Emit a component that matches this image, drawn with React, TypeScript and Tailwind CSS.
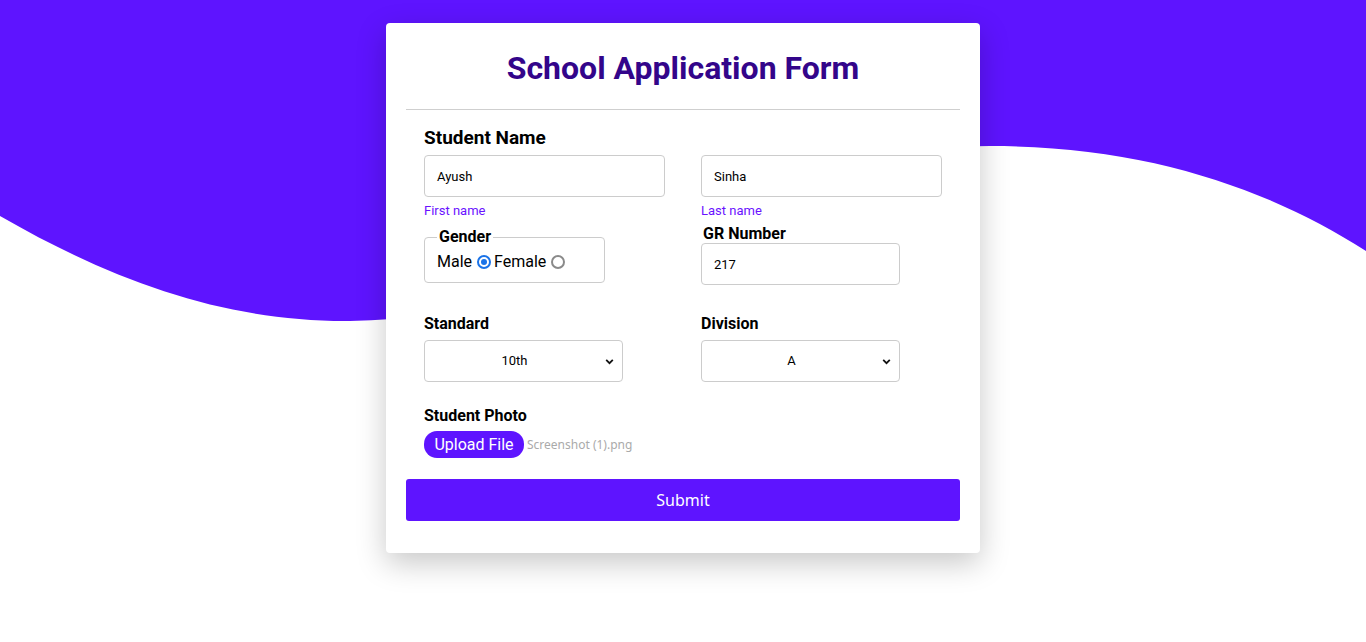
import React from "react";

export default function App() {
  return (
    <div className="relative w-full h-[642px] bg-white overflow-hidden" style={{ fontFamily: "Roboto, 'Liberation Sans', sans-serif" }}>
      <svg className="absolute inset-0" width="1366" height="642" viewBox="0 0 1366 642">
        <path
          d="M0 216 C 120 285, 230 322, 350 321 C 600 318, 780 146, 990 146 C 1150 146, 1270 190, 1366 251 L1366 0 L0 0 Z"
          fill="#5e14ff"
        />
      </svg>
      <div className="relative flex justify-center pt-[23px]">
        <div className="w-[594px] h-[530px] bg-white rounded-[4px] shadow-[0_10px_30px_rgba(0,0,0,0.22)] px-[20px]">
          <h1 className="text-center text-[32px] font-bold text-[#33058a] leading-none pt-[29px] pb-[25px] border-b border-[#cfcfcf]">
            School Application Form
          </h1>
          <div className="px-[18px]">
            <div className="pt-[16px] text-[19px] font-bold text-black leading-[24px]">Student Name</div>
            <div className="flex gap-[36px] mt-[5px]">
              <div className="w-[241px]">
                <div className="h-[42px] border border-[#cccccc] rounded-[4px] flex items-center px-[12px] pt-[1px] text-[13px] text-black">Ayush</div>
                <div className="text-[13px] text-[#6a12ff] mt-[6px] leading-[15px]">First name</div>
              </div>
              <div className="w-[241px]">
                <div className="h-[42px] border border-[#cccccc] rounded-[4px] flex items-center px-[12px] pt-[1px] text-[13px] text-black">Sinha</div>
                <div className="text-[13px] text-[#6a12ff] mt-[6px] leading-[15px]">Last name</div>
              </div>
            </div>
            <div className="flex gap-[96px] mt-[10px]">
              <fieldset className="w-[181px] h-[55px] border border-[#cccccc] rounded-[4px] px-[12px] pt-0">
                <legend className="text-[16px] font-bold px-[2px] leading-[18px]">Gender</legend>
                <div className="flex items-center text-[16px] text-black leading-[20px] mt-[6px]">
                  <span>Male</span>
                  <span className="ml-[5px] w-[14px] h-[14px] rounded-full border-2 border-[#1a73e8] flex items-center justify-center">
                    <span className="w-[6px] h-[6px] rounded-full bg-[#1a73e8]" />
                  </span>
                  <span className="ml-[3px]">Female</span>
                  <span className="ml-[5px] w-[14px] h-[14px] rounded-full border-2 border-[#8a8a8a]" />
                </div>
              </fieldset>
              <div>
                <div className="text-[16px] font-bold ml-[2px] leading-[18px] -mt-[3px]">GR Number</div>
                <div className="w-[199px] h-[42px] mt-[0px] border border-[#cccccc] rounded-[4px] flex items-center px-[12px] pt-[1px] text-[13px] text-black">217</div>
              </div>
            </div>
            <div className="flex gap-[78px] mt-[30px]">
              <div>
                <div className="text-[16px] font-bold leading-[18px]">Standard</div>
                <div className="w-[199px] h-[42px] mt-[7px] border border-[#cccccc] rounded-[4px] flex items-center relative text-[13px] text-black">
                  <span className="flex-1 text-center pr-[18px]">10th</span>
                  <svg className="absolute right-[7px]" width="11" height="11" viewBox="0 0 10 10"><path d="M2 3.5 L5 6.5 L8 3.5" fill="none" stroke="#111" strokeWidth="1.6" /></svg>
                </div>
              </div>
              <div>
                <div className="text-[16px] font-bold leading-[18px]">Division</div>
                <div className="w-[199px] h-[42px] mt-[7px] border border-[#cccccc] rounded-[4px] flex items-center relative text-[13px] text-black">
                  <span className="flex-1 text-center pr-[18px]">A</span>
                  <svg className="absolute right-[7px]" width="11" height="11" viewBox="0 0 10 10"><path d="M2 3.5 L5 6.5 L8 3.5" fill="none" stroke="#111" strokeWidth="1.6" /></svg>
                </div>
              </div>
            </div>
            <div className="text-[16px] font-bold leading-[18px] mt-[25px]">Student Photo</div>
            <div className="flex items-center mt-[6px]">
              <span className="w-[100px] h-[27px] rounded-[13px] bg-[#5e14ff] text-white text-[16px] flex items-center justify-center">Upload File</span>
              <span className="ml-[3px] text-[12px] text-[#aaaaaa]" style={{ fontFamily: "'Noto Sans', sans-serif" }}>Screenshot (1).png</span>
            </div>
          </div>
          <div className="mt-[21px] h-[42px] bg-[#5e14ff] rounded-[3px] flex items-center justify-center text-white text-[16px]" style={{ fontFamily: "'Noto Sans', sans-serif" }}>
            Submit
          </div>
        </div>
      </div>
    </div>
  );
}
